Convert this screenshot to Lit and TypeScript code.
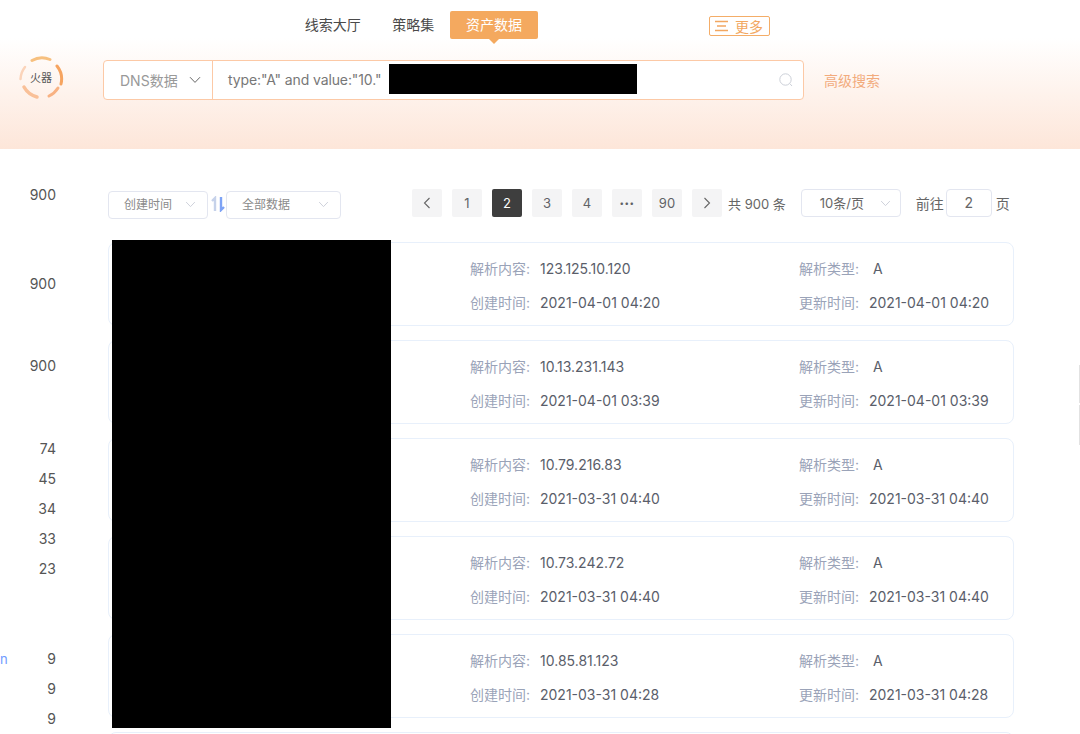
import { LitElement, html, css } from 'lit';
import { customElement } from 'lit/decorators.js';

const chevron = (cls: string) => html`<svg class=${cls} viewBox="0 0 12 8" fill="none"><path d="M1 1.2 6 6.4l5-5.2" stroke="currentColor" stroke-width="1" /></svg>`;

const records = [
  { value: '123.125.10.120', time: '2021-04-01 04:20' },
  { value: '10.13.231.143', time: '2021-04-01 03:39' },
  { value: '10.79.216.83', time: '2021-03-31 04:40' },
  { value: '10.73.242.72', time: '2021-03-31 04:40' },
  { value: '10.85.81.123', time: '2021-03-31 04:28' },
];

const railGroups = [
  { top: 36, gap: 0, items: ['900'] },
  { top: 69, gap: 0, items: ['900'] },
  { top: 62, gap: 0, items: ['900'] },
  { top: 63, gap: 10, items: ['74', '45', '34', '33', '23'] },
  { top: 70, gap: 10, items: ['9', '9', '9'] },
];

@customElement('app-root')
export class AppRoot extends LitElement {
  static styles = css`
    :host {
      display: block;
      position: relative;
      width: 1080px;
      height: 734px;
      overflow: hidden;
      background: #fff;
      color: #555;
      font-family: Inter, "Noto Sans CJK SC", sans-serif;
      font-size: 14px;
    }

    .header {
      height: 149px;
      background: linear-gradient(to bottom, #fff 0, #fff 38px, #fde6d9 149px);
    }

    .nav {
      display: flex;
      height: 43px;
      padding-left: 289px;
      align-items: flex-start;
    }
    .nav-item {
      height: 28px;
      margin-top: 11px;
      padding: 0 15.75px;
      line-height: 28px;
      color: #4a4a4a;
      white-space: nowrap;
    }
    .nav-item.active {
      position: relative;
      padding: 0 16px;
      background: #f4a95f;
      border-radius: 2px;
      color: #fff;
    }
    .nav-item.active::after {
      content: '';
      position: absolute;
      left: 39px;
      bottom: -5px;
      border-left: 5px solid transparent;
      border-right: 5px solid transparent;
      border-top: 5px solid #f4a95f;
    }
    .more {
      display: flex;
      align-items: center;
      gap: 6px;
      box-sizing: border-box;
      width: 61px;
      height: 20px;
      margin: 16px 0 0 171px;
      padding-left: 5px;
      border: 1px solid #f4ad68;
      border-radius: 2px;
      color: #f2a761;
      white-space: nowrap;
    }
    .more svg { width: 14px; height: 12px; flex: none; }

    .search-row {
      display: flex;
      align-items: center;
      padding-top: 15px;
    }
    .logo {
      position: relative;
      width: 48px;
      height: 48px;
      margin: -4px 38px 0 17px;
      flex: none;
    }
    .logo svg { display: block; width: 48px; height: 48px; filter: blur(0.6px); }
    .logo span {
      position: absolute;
      inset: 0;
      text-align: center;
      line-height: 49px;
      font-size: 11px;
      color: #555;
    }
    .search {
      display: flex;
      box-sizing: border-box;
      width: 701px;
      height: 40px;
      background: #fff;
      border: 1px solid #fcc9a6;
      border-radius: 4px;
    }
    .scope {
      display: flex;
      align-items: center;
      box-sizing: border-box;
      width: 109px;
      padding-left: 16px;
      border-right: 1px solid #fcc9a6;
      color: #999;
      white-space: nowrap;
    }
    .scope-arrow { width: 12px; height: 8px; margin-left: 11px; color: #666; }
    .query {
      flex: 1;
      padding-left: 15px;
      line-height: 38px;
      letter-spacing: -0.12px;
      color: #777;
      white-space: nowrap;
    }
    .search-icon { width: 14px; height: 14px; margin: 12px 10px 0 0; flex: none; }
    .advanced {
      margin-left: 20px;
      color: #f2ab7d;
      white-space: nowrap;
    }

    .body {
      display: grid;
      grid-template-columns: 108px 906px;
    }

    .rail {
      position: relative;
      text-align: right;
      padding-right: 52px;
    }
    .rail-group { display: flex; flex-direction: column; }
    .rail-num { height: 20px; line-height: 20px; }
    .rail-link {
      position: absolute;
      left: 0;
      top: 500px;
      color: #6f9bff;
      line-height: 20px;
      font-size: 13px;
    }

    .toolbar {
      display: flex;
      align-items: flex-start;
      height: 30px;
      margin: 40px 0 23px;
      color: #666;
      line-height: 30px;
    }
    .select {
      display: flex;
      align-items: center;
      justify-content: space-between;
      box-sizing: border-box;
      height: 28px;
      padding: 0 11px 1px 15px;
      border: 1px solid #e3e6f0;
      border-radius: 4px;
      color: #8a8a8a;
      font-size: 12px;
      white-space: nowrap;
    }
    .select svg { width: 11px; height: 7px; color: #c8ccd6; }
    .sel-time { width: 100px; margin-top: 2px; }
    .sel-data { width: 115px; margin-top: 2px; }
    .sort { width: 14px; height: 16px; margin: 7px 1px 0 3px; flex: none; }

    .pager { display: flex; gap: 10px; margin-left: 71px; }
    .page {
      display: flex;
      align-items: center;
      justify-content: center;
      width: 30px;
      height: 28px;
      background: #f4f4f5;
      border-radius: 2px;
      color: #606266;
      font-size: 13px;
    }
    .page.current { background: #3e3e3e; color: #fff; }
    .page.dots { font-size: 8px; letter-spacing: 0.5px; }
    .page svg { width: 8px; height: 12px; }
    .total { margin-left: 6px; white-space: nowrap; font-size: 13px; }
    .sel-size {
      width: 100px;
      margin-left: 15px;
      padding: 0 9px 0 18px;
      color: #666;
      font-size: 13px;
    }
    .goto { margin-left: 15px; white-space: nowrap; }
    .goto-input {
      box-sizing: border-box;
      width: 46px;
      height: 28px;
      margin: 0 4px 0 2px;
      border: 1px solid #e3e6f0;
      border-radius: 4px;
      text-align: center;
      line-height: 26px;
      color: #666;
    }

    .cards { display: flex; flex-direction: column; gap: 14px; }
    .card {
      display: grid;
      grid-template-columns: 361px 329px 1fr;
      grid-template-rows: 34px 34px;
      align-content: center;
      box-sizing: border-box;
      height: 84px;
      padding-top: 2px;
      flex: none;
      border: 1px solid #e8f0fb;
      border-radius: 8px;
    }
    .field {
      display: flex;
      align-items: center;
      white-space: nowrap;
    }
    .field.first { grid-column: 2; }
    .label { width: 70px; color: #9aa3b8; flex: none; }
    .val { color: #5a5e6a; }
    .val.type { margin-left: 4px; }

    .redact {
      position: absolute;
      background: #000;
    }
    .redact.query-mask { left: 389px; top: 64px; width: 248px; height: 30px; }
    .redact.card-mask { left: 112px; top: 240px; width: 279px; height: 488px; }

    .scroll-tick {
      position: absolute;
      right: 0;
      width: 1px;
      background: #e2e2e2;
    }
    .scroll-tick.a { top: 365px; height: 38px; }
    .scroll-tick.b { top: 405px; height: 40px; }
  `;

  render() {
    return html`
      <div class="header">
        <div class="nav">
          <div class="nav-item">线索大厅</div>
          <div class="nav-item">策略集</div>
          <div class="nav-item active">资产数据</div>
          <div class="more">
            <svg viewBox="0 0 14 12" fill="none" stroke="#f2a761" stroke-width="1.3"><path d="M0 1.5h13M2 6h9M0 10.5h13" /></svg>
            更多
          </div>
        </div>
        <div class="search-row">
          <div class="logo">
            <svg viewBox="0 0 48 48" fill="none" stroke-linecap="round">
              <path d="M15 6.5A20 20 0 0 1 33 5.5" stroke="#f7c07f" stroke-width="3" />
              <path d="M40 12A21 21 0 0 1 44 30" stroke="#f6a460" stroke-width="3" />
              <path d="M41 34A21 21 0 0 1 32 42" stroke="#f8b283" stroke-width="3" />
              <path d="M20 43A21 21 0 0 1 7 33" stroke="#f9c098" stroke-width="3.5" />
              <path d="M3.5 25A21 21 0 0 1 8 13" stroke="#fbd4ba" stroke-width="2.5" />
            </svg>
            <span>火器</span>
          </div>
          <div class="search">
            <div class="scope">DNS数据${chevron('scope-arrow')}</div>
            <div class="query">type:"A" and value:"10."</div>
            <svg class="search-icon" viewBox="0 0 14 14" fill="none" stroke="#ccd0d8" stroke-width="1"><circle cx="6.5" cy="6.5" r="5.7" /><path d="M10.8 10.6 13 13" /></svg>
          </div>
          <div class="advanced">高级搜索</div>
        </div>
      </div>

      <div class="body">
        <div class="rail">
          ${railGroups.map(g => html`
            <div class="rail-group" style="margin-top:${g.top}px;gap:${g.gap}px">
              ${g.items.map(n => html`<div class="rail-num">${n}</div>`)}
            </div>
          `)}
          <div class="rail-link">n</div>
        </div>
        <div>
          <div class="toolbar">
            <div class="select sel-time">创建时间${chevron('')}</div>
            <svg class="sort" viewBox="0 0 14 16" fill="none" stroke-width="2.4">
              <path d="M4 15V2L1 5" stroke="#c6d2ea" />
              <path d="M10 1v13l3-3" stroke="#7ea3f5" />
            </svg>
            <div class="select sel-data">全部数据${chevron('')}</div>
            <div class="pager">
              <div class="page"><svg viewBox="0 0 8 12" fill="none" stroke="#666" stroke-width="1.1"><path d="M6.5 1 1.5 6l5 5" /></svg></div>
              <div class="page">1</div>
              <div class="page current">2</div>
              <div class="page">3</div>
              <div class="page">4</div>
              <div class="page dots">•••</div>
              <div class="page">90</div>
              <div class="page"><svg viewBox="0 0 8 12" fill="none" stroke="#666" stroke-width="1.1"><path d="M1.5 1l5 5-5 5" /></svg></div>
            </div>
            <div class="total">共 900 条</div>
            <div class="select sel-size">10条/页${chevron('')}</div>
            <div class="goto">前往</div>
            <div class="goto-input">2</div>
            <div>页</div>
          </div>
          <div class="cards">
            ${records.map(r => html`
              <div class="card">
                <div class="field first"><span class="label">解析内容:</span><span class="val">${r.value}</span></div>
                <div class="field"><span class="label">解析类型:</span><span class="val type">A</span></div>
                <div class="field first"><span class="label">创建时间:</span><span class="val">${r.time}</span></div>
                <div class="field"><span class="label">更新时间:</span><span class="val">${r.time}</span></div>
              </div>
            `)}
            <div class="card"></div>
          </div>
        </div>
      </div>

      <div class="redact query-mask"></div>
      <div class="redact card-mask"></div>
      <div class="scroll-tick a"></div>
      <div class="scroll-tick b"></div>
    `;
  }
}
